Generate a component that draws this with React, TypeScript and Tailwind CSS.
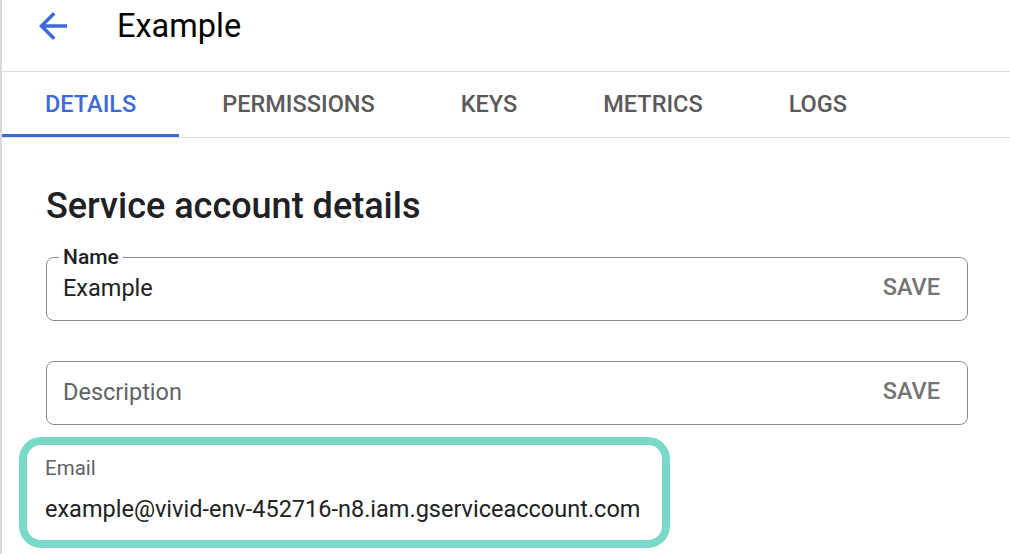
import React from "react";

const tabs = ["DETAILS", "PERMISSIONS", "KEYS", "METRICS", "LOGS"];

const ArrowBack: React.FC = () => (
  <svg width="42" height="42" viewBox="0 0 24 24" fill="#3d69d6">
    <path d="M20 11H7.83l5.59-5.59L12 4l-8 8 8 8 1.41-1.41L7.83 13H20v-2z" />
  </svg>
);

const Field: React.FC<{ label?: string; value?: string; placeholder?: string }> = ({
  label,
  value,
  placeholder,
}) => (
  <div className="relative flex h-[64px] w-[922px] items-center justify-between rounded-[8px] border border-[#8a8a8a] pl-[16px] pr-[27px]">
    {label && (
      <span className="absolute left-[12px] top-0 -translate-y-[55%] bg-white px-[4px] text-[21px] font-medium leading-[24px] text-[#202124]">
        {label}
      </span>
    )}
    {value ? (
      <span className="text-[23.5px] text-[#202124]">{value}</span>
    ) : (
      <span className="text-[23.5px] text-[#5f6368]">{placeholder}</span>
    )}
    <button className="-translate-y-[1px] text-[23.5px] font-medium text-[#757575]">SAVE</button>
  </div>
);

export default function App() {
  return (
    <div className="h-[554px] w-[1010px] overflow-hidden border-l-2 border-[#d9d9d9] bg-white font-['Roboto',sans-serif]">
      {/* header */}
      <div className="h-[72px] border-b border-[#dadce0]">
        <div className="flex h-[52px] items-center">
          <div className="ml-[30px]">
            <ArrowBack />
          </div>
          <h1 className="ml-[43px] text-[32.5px] leading-[32px] text-black">Example</h1>
        </div>
      </div>

      {/* tabs */}
      <div className="flex h-[66px] border-b border-[#dadce0]">
        {tabs.map((t, i) => (
          <div
            key={t}
            className={`relative flex items-center px-[43px] text-[23.5px] font-medium ${
              i === 0 ? "text-[#3d69d6]" : "text-[#5a5a5a]"
            }`}
          >
            {t}
            {i === 0 && <div className="absolute bottom-0 left-0 right-0 h-[3px] bg-[#3d69d6]" />}
          </div>
        ))}
      </div>

      {/* content */}
      <div className="pl-[44px]">
        <h2 className="mt-[50px] text-[36px] font-medium leading-[36px] text-[#202124]">
          Service account details
        </h2>
        <div className="mt-[33px]">
          <Field label="Name" value="Example" />
        </div>
        <div className="mt-[40px]">
          <Field placeholder="Description" />
        </div>
        <div className="ml-[-27px] mt-[12px] h-[111px] w-[651px] rounded-[22px] border-[8px] border-[#79d9c8] pl-[18px] pt-[9px]">
          <div className="text-[20.5px] leading-[28px] text-[#5f6368]">Email</div>
          <div className="mt-[13px] text-[23.5px] leading-[28px] text-[#202124]">
            example@vivid-env-452716-n8.iam.gserviceaccount.com
          </div>
        </div>
      </div>
    </div>
  );
}
